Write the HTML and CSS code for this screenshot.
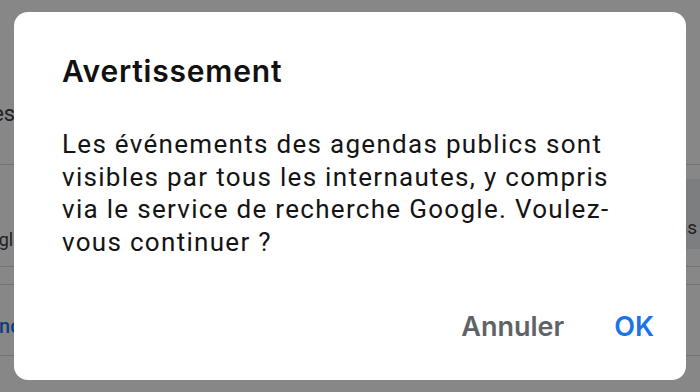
FILE: index.html
```html
<!DOCTYPE html>
<html lang="fr">
<head>
<meta charset="utf-8">
<title>Avertissement</title>
<link rel="stylesheet" href="styles.css">
</head>
<body>
<div class="page">
  <div class="bg-head"><span class="bg-title">Paramètres généraux</span></div>
  <div class="bg-row">
    <span class="bg-label">Réglages</span>
    <span class="bg-select">Options</span>
  </div>
  <div class="bg-row-thin"></div>
  <div class="bg-row-link"><span class="bg-link">nouvel agenda</span></div>
  <div class="bg-rest"></div>
</div>

<div class="overlay">
  <div class="dialog" role="dialog">
    <h2 class="dialog-title">Avertissement</h2>
    <p class="dialog-body">Les événements des agendas publics sont visibles par tous les internautes, y compris via le service de recherche Google. Voulez-vous continuer ?</p>
    <div class="dialog-actions">
      <button class="btn btn-cancel">Annuler</button>
      <button class="btn btn-ok">OK</button>
    </div>
  </div>
</div>
</body>
</html>
```

FILE: styles.css
```css
html, body {
  margin: 0;
  padding: 0;
}
body {
  width: 700px;
  height: 392px;
  overflow: hidden;
  background: #ffffff;
  font-family: Roboto, "Liberation Sans", Arial, sans-serif;
}

/* background page */
.page {
  display: flex;
  flex-direction: column;
  height: 392px;
  background: #ffffff;
}
.bg-head {
  height: 165px;
  box-sizing: border-box;
  padding-top: 100px;
  border-bottom: 1px solid #dadce0;
  white-space: nowrap;
}
.bg-title {
  display: block;
  margin-left: -98px;
  font-size: 22px;
  line-height: 28px;
  color: #3c4043;
}
.bg-row {
  height: 102px;
  box-sizing: border-box;
  border-bottom: 1px solid #dadce0;
  display: flex;
  justify-content: space-between;
  align-items: flex-start;
  white-space: nowrap;
}
.bg-label {
  margin-top: 63px;
  margin-left: -22px;
  font-size: 18px;
  line-height: 24px;
  color: #3c4043;
}
.bg-select {
  margin-top: 14px;
  width: 90px;
  height: 70px;
  box-sizing: border-box;
  padding: 37px 3px 0 0;
  text-align: right;
  background: #eceef0;
  font-size: 19px;
  line-height: 24px;
  color: #3c4043;
  overflow: hidden;
}
.bg-row-thin {
  height: 18px;
  box-sizing: border-box;
  border-bottom: 1px solid #dadce0;
}
.bg-row-link {
  height: 71px;
  box-sizing: border-box;
  border-bottom: 1px solid #dadce0;
  padding-top: 28px;
  white-space: nowrap;
}
.bg-link {
  display: block;
  margin-left: -1px;
  font-size: 20px;
  line-height: 26px;
  font-weight: 500;
  color: #1a73e8;
}
.bg-rest {
  flex: 1;
}

/* overlay + dialog */
.overlay {
  position: fixed;
  inset: 0;
  background: rgba(0, 0, 0, 0.47);
  display: flex;
  align-items: center;
  justify-content: center;
}
.dialog {
  width: 672px;
  height: 368px;
  box-sizing: border-box;
  background: #ffffff;
  border-radius: 14px;
  padding: 41px 48px 0 48px;
  display: flex;
  flex-direction: column;
}
.dialog-title {
  margin: 0;
  font-family: Inter, Roboto, "Liberation Sans", sans-serif;
  font-size: 30px;
  line-height: 36px;
  font-weight: 600;
  color: #111111;
  letter-spacing: 0.8px;
}
.dialog-body {
  margin: 39px 0 0 0;
  font-size: 26px;
  line-height: 32.5px;
  font-weight: 400;
  letter-spacing: 1.3px;
  color: #141414;
}
.dialog-actions {
  margin-top: auto;
  margin-bottom: 31px;
  margin-right: -26px;
  display: flex;
  justify-content: flex-end;
  gap: 30px;
}
.btn {
  border: none;
  background: transparent;
  font-family: Inter, Roboto, "Liberation Sans", sans-serif;
  font-size: 27px;
  line-height: 36px;
  font-weight: 600;
  padding: 4px 10px;
  border-radius: 6px;
  cursor: pointer;
}
.btn-cancel {
  color: #5f6368;
}
.btn-ok {
  color: #1a73e8;
}
```
